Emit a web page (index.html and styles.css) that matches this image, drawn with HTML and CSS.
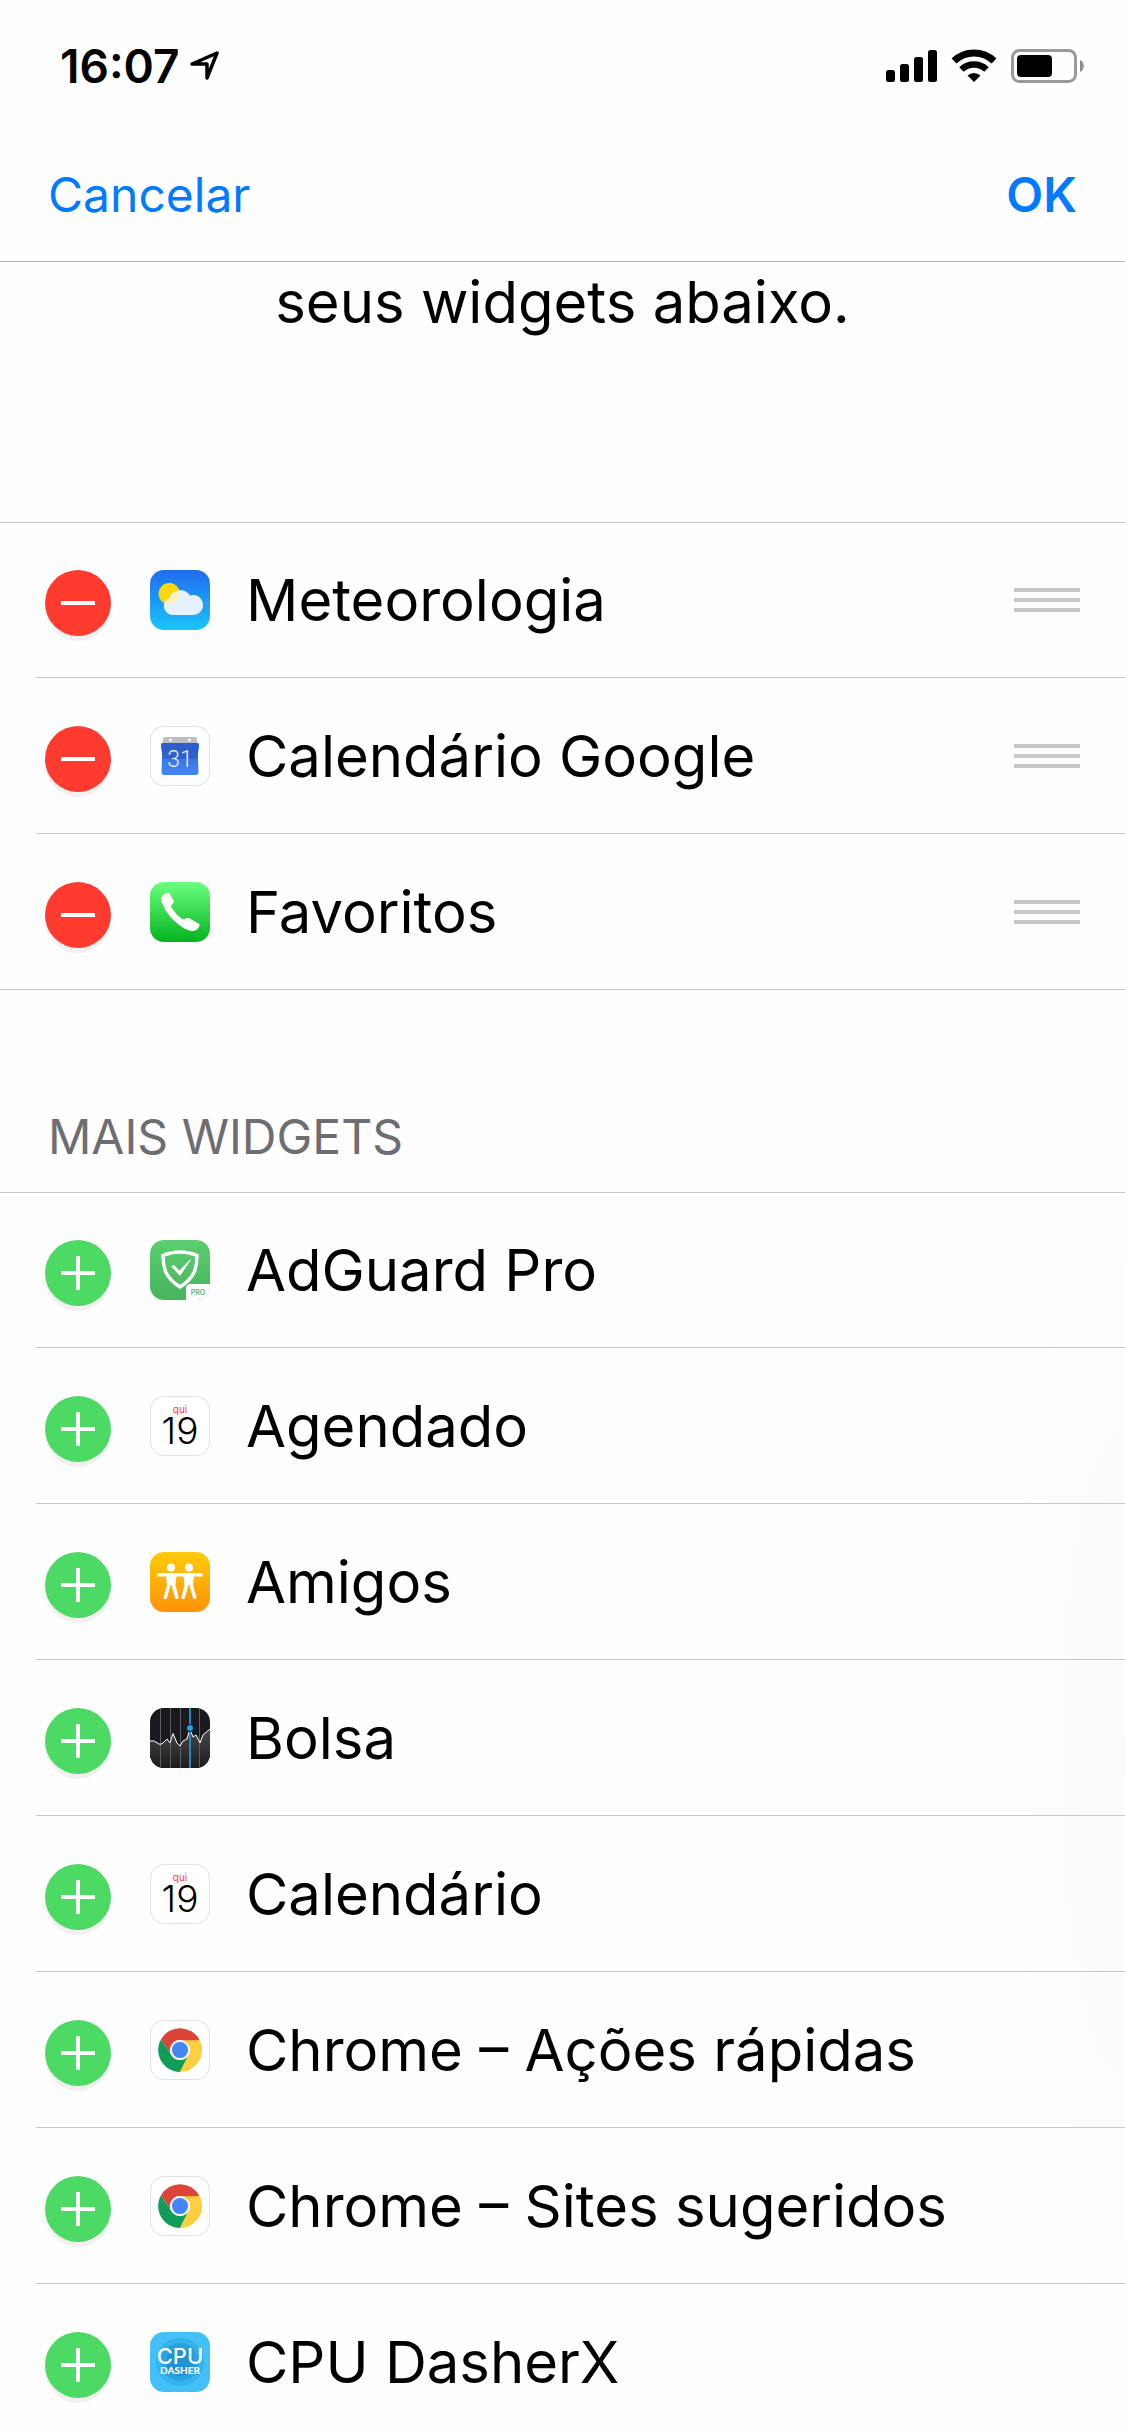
FILE: index.html
```
<!DOCTYPE html>
<html lang="pt">
<head>
    <meta charset="UTF-8">
    <meta name="viewport" content="width=device-width, initial-scale=1.0">
    <title>Adicionar widgets</title>
    <link rel="stylesheet" href="styles.css">
</head>
<body>
    <!-- shared icons -->
    <svg class="defs" aria-hidden="true">
        <defs>
            <linearGradient id="calBlue" x1="0" y1="0" x2="0" y2="1">
                <stop offset="0" stop-color="#3367d6"/>
                <stop offset="1" stop-color="#4285f4"/>
            </linearGradient>
        </defs>
        <symbol id="minus" viewBox="0 0 66 66">
            <path d="M16 33h34" stroke="#fff" stroke-width="4"/>
        </symbol>
        <symbol id="plus" viewBox="0 0 66 66">
            <path d="M16 33h34M33 16v34" stroke="#fff" stroke-width="4"/>
        </symbol>
        <symbol id="grip" viewBox="0 0 66 24">
            <path d="M0 2h66M0 12h66M0 22h66" stroke="#c7c7cc" stroke-width="4"/>
        </symbol>
        <symbol id="chrome" viewBox="0 0 60 60">
            <path d="M30 20h19.6A22 22 0 0 0 11 19.2L21.3 35A10 10 0 0 1 30 20z" fill="#db4437"/>
            <path d="M11 19.2A22 22 0 0 0 30 52l8.7-17a10 10 0 0 1-17.4 0z" fill="#0f9d58"/>
            <path d="M30 52A22 22 0 0 0 49.6 20H30a10 10 0 0 1 8.7 15z" fill="#ffcd40"/>
            <path d="M30 20h19.6l-15 3z" fill="#d9a02b" opacity=".5"/>
            <circle cx="30" cy="30" r="10" fill="#f1f1f1"/>
            <circle cx="30" cy="30" r="8" fill="#4285f4"/>
        </symbol>
    </svg>

    <div class="status-bar">
        <div class="clock">
            <span>16:07</span>
            <svg class="location" width="30" height="30" viewBox="0 0 30 30">
                <path d="M2 13L27 2 17 27V13z" fill="none" stroke="#000" stroke-width="3.500" stroke-linejoin="round"/>
            </svg>
        </div>
        <div class="indicators">
            <svg width="51" height="34" viewBox="0 0 51 34">
                <rect x="0" y="21" width="9" height="12" rx="2.5"/>
                <rect x="14" y="15" width="9" height="18" rx="2.5"/>
                <rect x="28" y="8" width="9" height="25" rx="2.5"/>
                <rect x="42" y="1" width="9" height="32" rx="2.5"/>
            </svg>
            <svg width="46" height="34" viewBox="0 0 46 34">
                <g fill="none" stroke="#000">
                    <path d="M3 12A29 29 0 0 1 43 12" stroke-width="7"/>
                    <path d="M10.500 20.500A18 18 0 0 1 35.500 20.500" stroke-width="6.500"/>
                </g>
                <path d="M23 33l-6.500-6.500a9.500 9.500 0 0 1 13 0z"/>
            </svg>
            <svg width="74" height="34" viewBox="0 0 74 34">
                <rect x="1.500" y="1.500" width="63" height="31" rx="7" fill="none" stroke="#9a9a9a" stroke-width="3"/>
                <rect x="6" y="6" width="35" height="22" rx="4"/>
                <path d="M69 11c5 1.500 5 10.500 0 12z" fill="#8e8e8e"/>
            </svg>
        </div>
    </div>

    <header class="nav-bar">
        <button type="button" class="nav-button">Cancelar</button>
        <button type="button" class="nav-button done">OK</button>
    </header>

    <main>
        <p class="intro">seus widgets abaixo.</p>

        <ul class="widgets">
            <li class="row">
                <button type="button" class="toggle remove" aria-label="Remover Meteorologia"><svg><use href="#minus"/></svg></button>
                <svg class="icon" viewBox="0 0 60 60">
                    <linearGradient id="sky" x1="0" y1="0" x2="0" y2="1">
                        <stop offset="0" stop-color="#1f6cf0"/>
                        <stop offset="1" stop-color="#1ac5fb"/>
                    </linearGradient>
                    <rect width="60" height="60" fill="url(#sky)"/>
                    <circle cx="19.300" cy="23.800" r="10.700" fill="#ffd60a"/>
                    <path d="M23 45a9.300 9.300 0 0 1-8.600-12.500A10 10 0 0 1 19.500 28 11.500 11.500 0 0 1 40 25.500 10 10 0 1 1 42.500 45z" fill="#f3f8fd" opacity=".93"/>
                    <path d="M29.400 20.500A10.700 10.700 0 0 1 15 33.600 9 9 0 0 1 20 28a11.500 11.500 0 0 1 9.400-7.500z" fill="#ffedb0" opacity=".7"/>
                </svg>
                <span class="label">Meteorologia</span>
                <button type="button" class="grip" aria-label="Mover Meteorologia"><svg><use href="#grip"/></svg></button>
            </li>
            <li class="row">
                <button type="button" class="toggle remove" aria-label="Remover Calendário Google"><svg><use href="#minus"/></svg></button>
                <svg class="icon outlined" viewBox="0 0 60 60">
                    <path d="M13 19v-6q0-2 2-2h30q2 0 2 2v6z" fill="#bdbdc1"/>
                    <circle cx="20.500" cy="14" r="1.500" fill="#fff"/>
                    <circle cx="39.500" cy="14" r="1.500" fill="#fff"/>
                    <path d="M13 17h34q2.500 0 2 3-1.500 7-1 13l.5 13q0 3-3 3h-31q-3 0-3-3l.5-13q.5-6-1-13-.5-3 2-3z" fill="url(#calBlue)"/>
                    <path d="M13 17h34q2.500 0 2 3-1.500 7-1 13H12q.5-6-1-13-.5-3 2-3z" fill="#2f5ac8" opacity=".75"/>
                    <text class="roboto" x="30" y="41" font-size="23" font-weight="300" fill="#e8f0fe" text-anchor="middle">31</text>
                </svg>
                <span class="label">Calendário Google</span>
                <button type="button" class="grip" aria-label="Mover Calendário Google"><svg><use href="#grip"/></svg></button>
            </li>
            <li class="row">
                <button type="button" class="toggle remove" aria-label="Remover Favoritos"><svg><use href="#minus"/></svg></button>
                <svg class="icon" viewBox="0 0 60 60">
                    <linearGradient id="phone" x1="0" y1="0" x2="0" y2="1">
                        <stop offset="0" stop-color="#6cff82"/>
                        <stop offset="1" stop-color="#04b31e"/>
                    </linearGradient>
                    <rect width="60" height="60" fill="url(#phone)"/>
                    <path d="M11.500 15.500q2-4 6-5 1-.3 1.800.8l4.300 7.200q.8 1.500-.3 2.600l-1.800 2q-.8 1 0 2.300 4 6.800 10 11.200 1.200 1 2.600.5l3-1q1.500-.5 2.700.5l8.800 5q1.500 1 .8 2.400-2.400 5.500-8 5-8-1.500-17.500-10.500-9.400-9.500-12.400-19-.6-2.500 0-4z" fill="#fff"/>
                </svg>
                <span class="label">Favoritos</span>
                <button type="button" class="grip" aria-label="Mover Favoritos"><svg><use href="#grip"/></svg></button>
            </li>
        </ul>

        <h2 class="section-title">MAIS WIDGETS</h2>

        <ul class="widgets more">
            <li class="row">
                <button type="button" class="toggle add" aria-label="Adicionar AdGuard Pro"><svg><use href="#plus"/></svg></button>
                <svg class="icon" viewBox="0 0 60 60">
                    <linearGradient id="guard" x1="0" y1="0" x2="0" y2="1">
                        <stop offset="0" stop-color="#5cce6f"/>
                        <stop offset="1" stop-color="#48b45c"/>
                    </linearGradient>
                    <rect width="60" height="60" fill="url(#guard)"/>
                    <path d="M30 12q9 0 17 3.500 0 9-2.500 16Q40 41 30 47 20 41 15.500 31.500 13 24.500 13 15.500 21 12 30 12z" fill="none" stroke="#fff" stroke-width="3.500"/>
                    <path d="M21 26l3-1 5.500 5.500 9-9.500 3-2-11.500 17z" fill="#fff"/>
                    <path d="M36 60V49q0-5 5-5h19v16z" fill="#fff"/>
                    <text x="48" y="55" font-size="7" font-weight="600" fill="#5cb56c" text-anchor="middle">PRO</text>
                </svg>
                <span class="label">AdGuard Pro</span>
            </li>
            <li class="row">
                <button type="button" class="toggle add" aria-label="Adicionar Agendado"><svg><use href="#plus"/></svg></button>
                <svg class="icon outlined" viewBox="0 0 60 60">
                    <text x="30" y="17" font-size="10" fill="#ff3b30" text-anchor="middle">qui</text>
                    <text x="30" y="48" font-size="37" font-weight="300" text-anchor="middle">19</text>
                </svg>
                <span class="label">Agendado</span>
            </li>
            <li class="row">
                <button type="button" class="toggle add" aria-label="Adicionar Amigos"><svg><use href="#plus"/></svg></button>
                <svg class="icon" viewBox="0 0 60 60">
                    <linearGradient id="friends" x1="0" y1="0" x2="0" y2="1">
                        <stop offset="0" stop-color="#fecb09"/>
                        <stop offset="1" stop-color="#fe9308"/>
                    </linearGradient>
                    <rect width="60" height="60" fill="url(#friends)"/>
                    <g fill="#fff">
                        <circle cx="21" cy="15.500" r="4"/>
                        <circle cx="39" cy="15.500" r="4"/>
                        <path d="M9 21h42q2 .5 2 2t-2 1.600H9q-2 0-2-1.600t2-2z"/>
                        <path d="M16 24h10.500l-1 9 3.200 12.500q0 1.500-1.600 1.500t-2-1l-3.600-13h-1l-3.400 13q-.4 1-2 1t-1.600-1.500L17 33z"/>
                        <path d="M33.500 24H44l-1 9 3.500 12.500q0 1.500-1.600 1.500t-2-1l-3.400-13h-1l-3.600 13q-.4 1-2 1t-1.600-1.500L34.500 33z"/>
                    </g>
                </svg>
                <span class="label">Amigos</span>
            </li>
            <li class="row">
                <button type="button" class="toggle add" aria-label="Adicionar Bolsa"><svg><use href="#plus"/></svg></button>
                <svg class="icon" viewBox="0 0 60 60">
                    <linearGradient id="area" x1="0" y1="0" x2="0" y2="1">
                        <stop offset="0" stop-color="#48484c"/>
                        <stop offset="1" stop-color="#1c1c1e"/>
                    </linearGradient>
                    <rect width="60" height="60" fill="#1a191e"/>
                    <path d="M0 33h4l6 3.500 3-1.500 4-4 3 4 3-9.500 4 9.500 3 3 3-5 4-2 2-7h2l2 5 3-2 4 8 3-8 7-6v39H0z" fill="url(#area)"/>
                    <path d="M10.500 0v60M20.500 0v60M30.500 0v60M49.500 0v60" stroke="#5e5e62"/>
                    <path d="M0 33h4l6 3.500 3-1.500 4-4 3 4 3-9.500 4 9.500 3 3 3-5 4-2 2-7h2l2 5 3-2 4 8 3-8 7-6" fill="none" stroke="#fff" stroke-linejoin="round"/>
                    <path d="M40 0v60" stroke="#1f8ac4" stroke-width="2"/>
                    <circle cx="40" cy="20" r="3.500" fill="#14aaf5" stroke="#1a191e"/>
                </svg>
                <span class="label">Bolsa</span>
            </li>
            <li class="row">
                <button type="button" class="toggle add" aria-label="Adicionar Calendário"><svg><use href="#plus"/></svg></button>
                <svg class="icon outlined" viewBox="0 0 60 60">
                    <text x="30" y="17" font-size="10" fill="#ff3b30" text-anchor="middle">qui</text>
                    <text x="30" y="48" font-size="37" font-weight="300" text-anchor="middle">19</text>
                </svg>
                <span class="label">Calendário</span>
            </li>
            <li class="row">
                <button type="button" class="toggle add" aria-label="Adicionar Chrome – Ações rápidas"><svg><use href="#plus"/></svg></button>
                <svg class="icon outlined"><use href="#chrome"/></svg>
                <span class="label">Chrome – Ações rápidas</span>
            </li>
            <li class="row">
                <button type="button" class="toggle add" aria-label="Adicionar Chrome – Sites sugeridos"><svg><use href="#plus"/></svg></button>
                <svg class="icon outlined"><use href="#chrome"/></svg>
                <span class="label">Chrome – Sites sugeridos</span>
            </li>
            <li class="row">
                <button type="button" class="toggle add" aria-label="Adicionar CPU DasherX"><svg><use href="#plus"/></svg></button>
                <svg class="icon" viewBox="0 0 60 60">
                    <rect width="60" height="60" fill="#43c0f7"/>
                    <circle cx="30" cy="30" r="24" fill="#36b2ec"/>
                    <circle cx="30" cy="30" r="19" fill="#2ba2e0"/>
                    <circle cx="30" cy="30" r="14" fill="#2292d2"/>
                    <text x="30" y="32" font-size="22" font-weight="500" fill="#fff" text-anchor="middle">CPU</text>
                    <text class="lato" x="30" y="42" font-size="10" font-weight="900" fill="#fff" text-anchor="middle">DASHER</text>
                </svg>
                <span class="label">CPU DasherX</span>
            </li>
        </ul>
    </main>
</body>
</html>
```

FILE: styles.css
```
* {
    box-sizing: border-box;
}
html {
    overflow: hidden;
}
body {
    margin: 0;
    background-color: #fefefe;
    color: #000;
    font-family: Inter, "Liberation Sans", sans-serif;
}
button {
    padding: 0;
    border: none;
    background: none;
    font-family: inherit;
    cursor: pointer;
}
svg {
    display: block;
}
.defs {
    position: absolute;
    width: 0;
    height: 0;
}

/* status bar */
.status-bar {
    display: flex;
    justify-content: space-between;
    align-items: center;
    height: 132px;
    padding: 0 40px 0 60px;
}
.clock {
    display: flex;
    align-items: center;
    gap: 10px;
    font-size: 46px;
    font-weight: 600;
}
.indicators {
    display: flex;
    gap: 14px;
}

/* navigation */
.nav-bar {
    display: flex;
    justify-content: space-between;
    align-items: center;
    height: 130px;
    padding: 0 48px 4px;
    border-bottom: 1px solid #b2b2b2;
}
.nav-button {
    color: #007aff;
    font-size: 48px;
    line-height: 60px;
}
.done {
    font-weight: 600;
}
.intro {
    margin: 0;
    padding: 4px 48px 184px;
    font-size: 58px;
    line-height: 72px;
    text-align: center;
}

/* widget lists */
.widgets {
    margin: 0;
    padding: 0;
    list-style: none;
    background: linear-gradient(#c8c7cc, #c8c7cc) top / 100% 1px no-repeat;
}
.row {
    display: flex;
    align-items: flex-start;
    height: 156px;
    padding: 48px 45px 0;
    background: linear-gradient(#c8c7cc, #c8c7cc) 36px 100% / 100% 1px no-repeat;
}
.row:last-child {
    background-position: 0 100%;
}
.more {
    background:
        linear-gradient(#c8c7cc, #c8c7cc) top / 100% 1px no-repeat,
        radial-gradient(ellipse 110px 45% at 100% 45%, #fafafa, #fefefe);
}
.toggle {
    width: 66px;
    height: 66px;
    margin-right: 39px;
    border-radius: 50%;
    box-shadow: 0 5px 1px #f1f1f1;
}
.toggle svg {
    width: 66px;
    height: 66px;
}
.remove {
    background-color: #ff3b30;
}
.add {
    background-color: #4cd964;
}
.icon {
    width: 60px;
    height: 60px;
    margin-right: 36px;
    border-radius: 14px;
}
.outlined {
    background-color: #fff;
    box-shadow: inset 0 0 0 1px #e2e2e2;
}
.roboto {
    font-family: Roboto, sans-serif;
}
.lato {
    font-family: Lato, sans-serif;
}
.label {
    flex: 1;
    font-size: 58px;
    line-height: 60px;
    white-space: nowrap;
}
.grip {
    padding: 18px 0;
}
.grip svg {
    width: 66px;
    height: 24px;
}
.section-title {
    margin: 0;
    padding: 117px 48px 25px;
    color: #6d6d72;
    font-size: 48px;
    font-weight: 400;
    line-height: 60px;
}
```
